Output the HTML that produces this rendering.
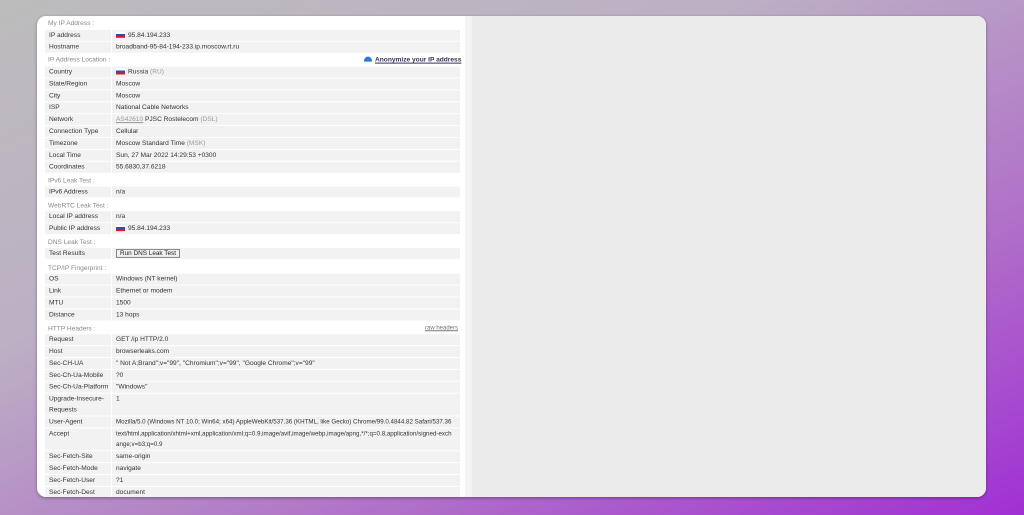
<!DOCTYPE html><html><head><style>
body{margin:0;width:1024px;height:515px;overflow:hidden;background:linear-gradient(155deg,#bcbcbc 0%,#bcb0c4 35%,#b070c8 70%,#a030d4 100%);font-family:"Liberation Sans",sans-serif;position:relative}
.card{position:absolute;left:37px;top:16px;width:949px;height:481px;background:#fff;border-radius:9px;overflow:hidden;box-shadow:0 1px 3px rgba(0,0,0,.35)}
.right{position:absolute;left:435px;top:0;right:0;bottom:0;background:#ebebeb}
.sb{position:absolute;left:428px;top:0;width:7px;bottom:0;background:#f3f3f3}
.w{position:absolute;left:0;top:0;width:430px;height:490px;transform:translateY(2px) scaleY(0.9913);transform-origin:0 0}
.r{position:absolute;left:8px;width:415px;font-size:6.6px;color:#333}
.l,.v{position:absolute;top:0;bottom:0;background:#f2f2f2;padding-left:4px;box-sizing:border-box;line-height:11px}
.l{left:0;width:66px}.v{left:67px;right:0}
.h{position:absolute;left:11px;font-size:6.6px;color:#888;line-height:11px}
.f{display:inline-block;width:9px;height:6px;vertical-align:-1px;margin-right:3px;background:linear-gradient(#fff 0 33%,#2a4fb0 33% 66%,#d42020 66%)}
.g{color:#999}
</style></head><body><div class="card">
<div class="right"></div><div class="sb"></div>
<div class="w">
<div class="h" style="top:0">My IP Address :</div>
<div class="r" style="top:12px;height:11px"><div class="l">IP address</div><div class="v"><span class="f"></span>95.84.194.233</div></div>
<div class="r" style="top:24px;height:11px"><div class="l">Hostname</div><div class="v">broadband-95-84-194-233.ip.moscow.rt.ru</div></div>
<div class="h" style="top:37px">IP Address Location :</div>
<div style="position:absolute;left:327px;top:37px;font-size:6.6px;line-height:11px;color:#335;font-weight:bold;text-decoration:underline"><span style="display:inline-block;width:8px;height:5px;border-radius:5px 5px 0 0;background:#2a7ad8;margin-right:3px;text-decoration:none"></span>Anonymize your IP address</div>
<div class="r" style="top:49px;height:11px"><div class="l">Country</div><div class="v"><span class="f"></span>Russia <span class="g">(RU)</span></div></div>
<div class="r" style="top:61px;height:11px"><div class="l">State/Region</div><div class="v">Moscow</div></div>
<div class="r" style="top:73px;height:11px"><div class="l">City</div><div class="v">Moscow</div></div>
<div class="r" style="top:85px;height:11px"><div class="l">ISP</div><div class="v">National Cable Networks</div></div>
<div class="r" style="top:97px;height:11px"><div class="l">Network</div><div class="v"><u class="g">AS42610</u> PJSC Rostelecom <span class="g">(DSL)</span></div></div>
<div class="r" style="top:109px;height:11px"><div class="l">Connection Type</div><div class="v">Cellular</div></div>
<div class="r" style="top:121px;height:11px"><div class="l">Timezone</div><div class="v">Moscow Standard Time <span class="g">(MSK)</span></div></div>
<div class="r" style="top:133px;height:11px"><div class="l">Local Time</div><div class="v">Sun, 27 Mar 2022 14:29:53 +0300</div></div>
<div class="r" style="top:145px;height:11px"><div class="l">Coordinates</div><div class="v">55.6830,37.6218</div></div>
<div class="h" style="top:159px">IPv6 Leak Test :</div>
<div class="r" style="top:170px;height:11px"><div class="l">IPv6 Address</div><div class="v">n/a</div></div>
<div class="h" style="top:184px">WebRTC Leak Test :</div>
<div class="r" style="top:195px;height:11px"><div class="l">Local IP address</div><div class="v">n/a</div></div>
<div class="r" style="top:207px;height:11px"><div class="l">Public IP address</div><div class="v"><span class="f"></span>95.84.194.233</div></div>
<div class="h" style="top:221px">DNS Leak Test :</div>
<div class="r" style="top:232px;height:11px"><div class="l">Test Results</div><div class="v"><span style="display:inline-block;border:1px solid #888;background:#f0f0f0;line-height:7px;padding:0 3px;font-size:6.4px;color:#222">Run DNS Leak Test</span></div></div>
<div class="h" style="top:247px">TCP/IP Fingerprint :</div>
<div class="r" style="top:258px;height:11px"><div class="l">OS</div><div class="v">Windows (NT kernel)</div></div>
<div class="r" style="top:270px;height:11px"><div class="l">Link</div><div class="v">Ethernet or modem</div></div>
<div class="r" style="top:282px;height:11px"><div class="l">MTU</div><div class="v">1500</div></div>
<div class="r" style="top:294px;height:11px"><div class="l">Distance</div><div class="v">13 hops</div></div>
<div class="h" style="top:308px">HTTP Headers :</div>
<div style="position:absolute;left:388px;top:308px;font-size:6px;line-height:11px;color:#777;text-decoration:underline">raw headers</div>
<div class="r" style="top:319px;height:11px"><div class="l">Request</div><div class="v">GET /ip HTTP/2.0</div></div>
<div class="r" style="top:331px;height:11px"><div class="l">Host</div><div class="v">browserleaks.com</div></div>
<div class="r" style="top:343px;height:11px"><div class="l">Sec-CH-UA</div><div class="v">" Not A;Brand";v="99", "Chromium";v="99", "Google Chrome";v="99"</div></div>
<div class="r" style="top:355px;height:11px"><div class="l">Sec-Ch-Ua-Mobile</div><div class="v">?0</div></div>
<div class="r" style="top:367px;height:11px"><div class="l">Sec-Ch-Ua-Platform</div><div class="v">"Windows"</div></div>
<div class="r" style="top:379px;height:22px"><div class="l">Upgrade-Insecure-<br>Requests</div><div class="v">1</div></div>
<div class="r" style="top:402px;height:11px"><div class="l">User-Agent</div><div class="v" style="font-size:6.2px;white-space:nowrap">Mozilla/5.0 (Windows NT 10.0; Win64; x64) AppleWebKit/537.36 (KHTML, like Gecko) Chrome/99.0.4844.82 Safari/537.36</div></div>
<div class="r" style="top:414px;height:22px"><div class="l">Accept</div><div class="v" style="font-size:6.2px;padding-right:6px;word-break:break-all">text/html,application/xhtml+xml,application/xml;q=0.9,image/avif,image/webp,image/apng,*/*;q=0.8,application/signed-exchange;v=b3;q=0.9</div></div>
<div class="r" style="top:437px;height:11px"><div class="l">Sec-Fetch-Site</div><div class="v">same-origin</div></div>
<div class="r" style="top:449px;height:11px"><div class="l">Sec-Fetch-Mode</div><div class="v">navigate</div></div>
<div class="r" style="top:461px;height:11px"><div class="l">Sec-Fetch-User</div><div class="v">?1</div></div>
<div class="r" style="top:473px;height:11px"><div class="l">Sec-Fetch-Dest</div><div class="v">document</div></div>
</div>
</div></body></html>
